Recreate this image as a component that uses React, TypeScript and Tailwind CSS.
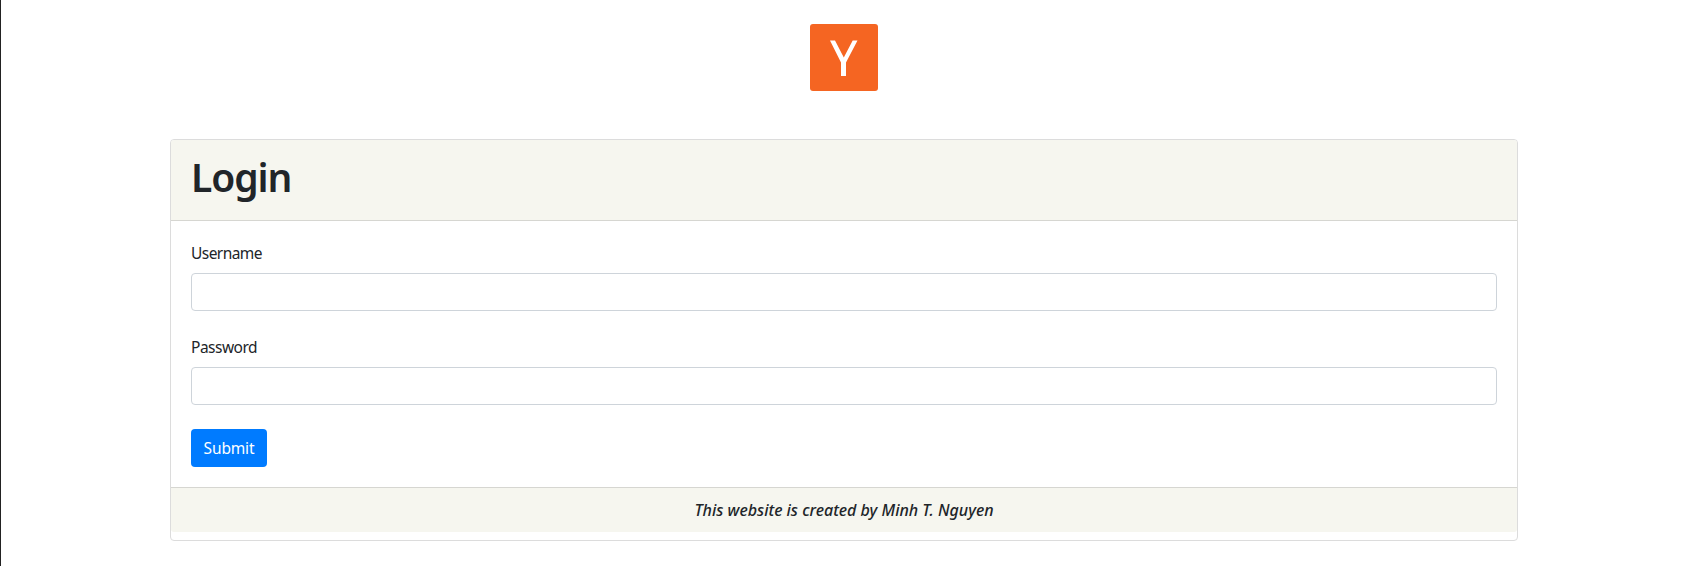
export default function App() {
  return (
    <div className="h-[566px] overflow-hidden border-l border-[#222] bg-white pl-px font-['Noto_Sans',sans-serif] text-base leading-6 text-[#212529]">
      <div className="flex h-[139px] justify-center pt-6">
        <svg className="h-[67px] w-[68px]" viewBox="0 0 68 67">
          <rect width="68" height="67" rx="3" fill="#f56522" />
          <path d="M20 16.500h5l8.800 17 8.900-17h4.800L36 38.500V52h-5V38.500z" fill="#fff" />
        </svg>
      </div>
      <main className="mx-auto h-[402px] w-[1348px] rounded border border-[#dcdcdc]">
        <header className="h-[81px] rounded-t-[3px] border-b border-[#d6d6d1] bg-[#f6f6ef] px-5 pt-[13px]">
          <h1 className="text-[39px] leading-[48px] font-semibold tracking-[-1.1px]">Login</h1>
        </header>
        <form className="h-[266px] px-5 pt-5">
          <label className="mb-2 block text-[15.5px] tracking-[-0.55px]" htmlFor="user">Username</label>
          <input id="user" className="mb-6 block h-[38px] w-full rounded border border-[#ced4da]" />
          <label className="mb-2 block text-[15.5px] tracking-[-0.5px]" htmlFor="pass">Password</label>
          <input id="pass" type="password" className="mb-6 block h-[38px] w-full rounded border border-[#ced4da]" />
          <button type="button" className="block h-[38px] w-[76px] rounded bg-[#007bff] text-[15.5px] tracking-[-0.15px] text-white">Submit</button>
        </form>
        <footer className="h-[45px] rounded-b-[3px] border-t border-[#d6d6d1] bg-[#f6f6ef] pt-2.5 text-center font-medium italic">This website is created by Minh T. Nguyen</footer>
      </main>
    </div>
  );
}
